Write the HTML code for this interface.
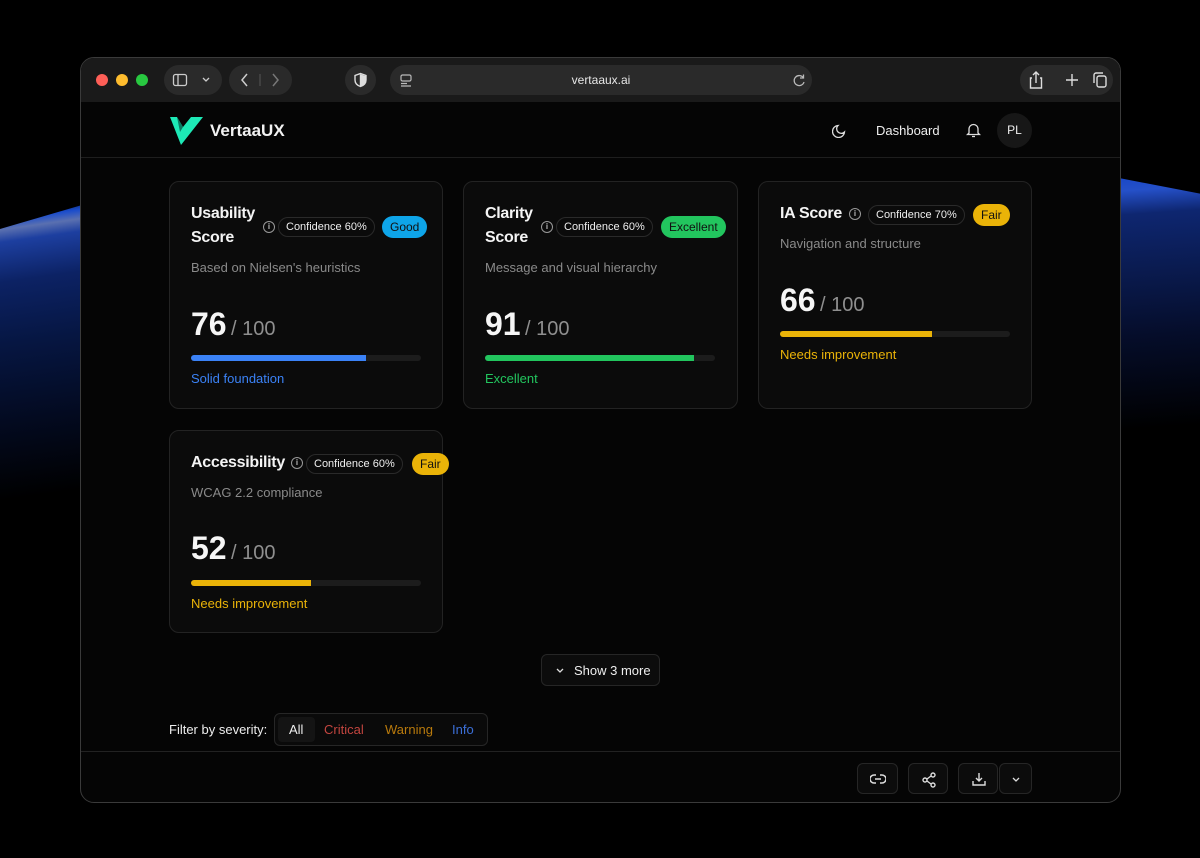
<!DOCTYPE html>
<html><head><meta charset="utf-8"><style>
*{margin:0;padding:0;box-sizing:border-box}
body{width:1200px;height:858px;background:#000;position:relative;overflow:hidden;font-family:"Liberation Sans",sans-serif;color:#fff}
.abs{position:absolute}
.glowL{left:0;top:205px;width:82px;height:300px;background:linear-gradient(172deg,rgba(0,0,0,0) 0%,#1a4ccc 5%,#5a70b0 8%,#1d3fa0 12%,#0c2264 25%,#061642 45%,#030a20 70%,#000 95%);clip-path:polygon(0 8%,100% 0,100% 100%,0 100%)}
.glowR{left:1119px;top:178px;width:81px;height:260px;background:linear-gradient(176deg,#1a48c8 0%,#2550c8 5%,#0e2670 14%,#0a1b50 35%,#050d2a 60%,#000 95%);clip-path:polygon(0 0,100% 6%,100% 100%,0 100%)}
.win{left:80px;top:57px;width:1041px;height:746px;border:1px solid #3a3a3a;border-radius:14px;background:#050505;overflow:hidden}
.tb{left:0;top:0;width:100%;height:44px;background:#1a1a1a}
.pill{background:#2a2a2a;border-radius:16px;height:30px;top:7px}
.dot{width:12px;height:12px;border-radius:50%;top:16px}
.hdr{left:0;top:44px;width:100%;height:56px;border-bottom:1px solid #1e1e1e;background:#050505}
.card{background:#0b0b0b;border:1px solid #232323;border-radius:10px}
.t{font-size:16px;font-weight:bold;color:#f4f4f4;line-height:24px;letter-spacing:-0.3px}
.conf{border:1px solid #2a2a2a;border-radius:10px;font-size:11px;height:20px;line-height:18px;padding:0 7px;color:#eee}
.badge{border-radius:11px;font-size:12px;height:22px;line-height:22px;padding:0 8px;color:#111}
.sub{font-size:13px;color:#8a8a8a}
.big{font-size:32px;font-weight:bold;color:#f6f6f6}
.den{font-size:20px;color:#8f8f8f}
.bar{height:6px;border-radius:3px;background:#1c1c1c;overflow:hidden}
.lbl{font-size:13px}
.info{width:12px;height:12px;border:1.3px solid #999;border-radius:50%;font-size:8px;color:#bbb;text-align:center;line-height:10px;font-weight:bold}
.btn{background:#0c0c0c;border:1px solid #262626;border-radius:6px}
</style></head><body>
<div class="abs glowL"></div>
<div class="abs glowR"></div>
<div class="abs win">
 <div class="abs tb">
  <div class="abs dot" style="left:15px;background:#fe5f57"></div>
  <div class="abs dot" style="left:35px;background:#febc2e"></div>
  <div class="abs dot" style="left:55px;background:#28c840"></div>
  <div class="abs pill" style="left:83px;width:58px"><svg class="abs" style="left:8px;top:7px" width="16" height="16" viewBox="0 0 16 16" fill="none" stroke="#ccc" stroke-width="1.3"><rect x="1.5" y="2.5" width="13" height="11" rx="2"/><path d="M6 2.5v11"/></svg><svg class="abs" style="left:38px;top:12px" width="8" height="6" viewBox="0 0 8 6" fill="none" stroke="#ccc" stroke-width="1.3"><path d="M1 1l3 3 3-3"/></svg></div>
  <div class="abs pill" style="left:148px;width:63px"><svg class="abs" style="left:8px;top:6px" width="48" height="18" viewBox="0 0 48 18" fill="none" stroke="#ccc" stroke-width="1.5"><path d="M10 3l-5 6 5 6"/><path d="M23 3v12" stroke="#555" stroke-width="1"/><path d="M36 3l5 6-5 6" stroke="#777"/></svg></div>
  <div class="abs pill" style="left:264px;width:31px"><svg class="abs" style="left:8px;top:7px" width="15" height="16" viewBox="0 0 15 16" fill="none" stroke="#ddd" stroke-width="1.4"><path d="M7.5 1.5l5.5 2v4.5c0 3.5-2.5 5.5-5.5 6.5-3-1-5.5-3-5.5-6.5V3.5z"/><path d="M7.5 3l4.5 1.6v3.4c0 3-2 4.5-4.5 5.4z" fill="#ddd"/></svg></div>
  <div class="abs pill" style="left:309px;width:422px;background:#2a2a2a"><span class="abs" style="left:0;width:100%;text-align:center;top:8px;font-size:12px;color:#e6e6e6">vertaaux.ai</span><svg class="abs" style="left:10px;top:9px" width="12" height="13" viewBox="0 0 12 13" fill="none" stroke="#bbb" stroke-width="1.2"><rect x="1" y="1" width="10" height="6" rx="1.5"/><path d="M1 9.5h6M1 12h10"/></svg><svg class="abs" style="left:403px;top:8px" width="13" height="14" viewBox="0 0 13 14" fill="none" stroke="#bbb" stroke-width="1.3"><path d="M10.5 5A5 5 0 1 0 11 9"/><path d="M10.5 1.5V5H7"/></svg></div>
  <div class="abs pill" style="left:939px;width:93px"><svg class="abs" style="left:7px;top:5px" width="80" height="20" viewBox="0 0 80 20" fill="none" stroke="#ddd" stroke-width="1.4"><path d="M5 8H3.5v10h11V8H13M9 13V2M6 5l3-3 3 3"/><path d="M45 4v12M39 10h12"/><rect x="70" y="6" width="9" height="11" rx="2"/><path d="M67 13V5a2 2 0 0 1 2-2h7"/></svg></div>
 </div>
 <div class="abs hdr">
  <svg class="abs" style="left:89px;top:15px" width="34" height="28" viewBox="0 0 34 28"><path d="M0 0h7l6 10L21 0h12L11 28z" fill="#1de9b6"/><path d="M7 0l6 10-3 5z" fill="#0a7a60"/></svg>
  <span class="abs" style="left:129px;top:19px;font-size:17px;font-weight:bold;color:#f2f2f2">VertaaUX</span>
  <svg class="abs" style="left:751px;top:21px" width="15" height="15" viewBox="0 0 15 15" fill="none" stroke="#ddd" stroke-width="1.3"><path d="M12.5 9A6 6 0 1 1 6 2.5 4.5 4.5 0 0 0 12.5 9z"/></svg>
  <span class="abs" style="left:795px;top:21px;font-size:13px;color:#eee">Dashboard</span>
  <svg class="abs" style="left:885px;top:20px" width="15" height="16" viewBox="0 0 15 16" fill="none" stroke="#ddd" stroke-width="1.3"><path d="M3 11V7a4.5 4.5 0 0 1 9 0v4l1.5 1.5h-12z"/><path d="M6 14.5h3"/></svg>
  <div class="abs" style="left:916px;top:11px;width:35px;height:35px;border-radius:50%;background:#171717;font-size:12px;line-height:35px;text-align:center;color:#eee">PL</div>
 </div>
</div>

<!-- card 1 -->
<div class="abs card" style="left:169px;top:181px;width:274px;height:228px"></div>
<div class="abs t" style="left:191px;top:202px">Usability<br>Score</div>
<div class="abs info" style="left:263px;top:221px">i</div>
<div class="abs conf" style="left:278px;top:217px">Confidence 60%</div>
<div class="abs badge" style="left:382px;top:216px;background:#0ea5e9">Good</div>
<div class="abs sub" style="left:191px;top:260px">Based on Nielsen's heuristics</div>
<div class="abs" style="left:191px;top:306px"><span class="big">76</span> <span class="den">/ 100</span></div>
<div class="abs bar" style="left:191px;top:355px;width:230px"><div style="width:76%;height:100%;background:#3b82f6"></div></div>
<div class="abs lbl" style="left:191px;top:371px;color:#3b82f6">Solid foundation</div>

<!-- card 2 -->
<div class="abs card" style="left:463px;top:181px;width:275px;height:228px"></div>
<div class="abs t" style="left:485px;top:202px">Clarity<br>Score</div>
<div class="abs info" style="left:541px;top:221px">i</div>
<div class="abs conf" style="left:556px;top:217px">Confidence 60%</div>
<div class="abs badge" style="left:661px;top:216px;background:#22c55e">Excellent</div>
<div class="abs sub" style="left:485px;top:260px">Message and visual hierarchy</div>
<div class="abs" style="left:485px;top:306px"><span class="big">91</span> <span class="den">/ 100</span></div>
<div class="abs bar" style="left:485px;top:355px;width:230px"><div style="width:91%;height:100%;background:#22c55e"></div></div>
<div class="abs lbl" style="left:485px;top:371px;color:#22c55e">Excellent</div>

<!-- card 3 -->
<div class="abs card" style="left:758px;top:181px;width:274px;height:228px"></div>
<div class="abs t" style="left:780px;top:202px">IA Score</div>
<div class="abs info" style="left:849px;top:208px">i</div>
<div class="abs conf" style="left:868px;top:205px">Confidence 70%</div>
<div class="abs badge" style="left:973px;top:204px;background:#eab308">Fair</div>
<div class="abs sub" style="left:780px;top:236px">Navigation and structure</div>
<div class="abs" style="left:780px;top:282px"><span class="big">66</span> <span class="den">/ 100</span></div>
<div class="abs bar" style="left:780px;top:331px;width:230px"><div style="width:66%;height:100%;background:#eab308"></div></div>
<div class="abs lbl" style="left:780px;top:347px;color:#eab308">Needs improvement</div>

<!-- card 4 -->
<div class="abs card" style="left:169px;top:430px;width:274px;height:203px"></div>
<div class="abs t" style="left:191px;top:451px">Accessibility</div>
<div class="abs info" style="left:291px;top:457px">i</div>
<div class="abs conf" style="left:306px;top:454px">Confidence 60%</div>
<div class="abs badge" style="left:412px;top:453px;background:#eab308">Fair</div>
<div class="abs sub" style="left:191px;top:485px">WCAG 2.2 compliance</div>
<div class="abs" style="left:191px;top:530px"><span class="big">52</span> <span class="den">/ 100</span></div>
<div class="abs bar" style="left:191px;top:580px;width:230px"><div style="width:52%;height:100%;background:#eab308"></div></div>
<div class="abs lbl" style="left:191px;top:596px;color:#eab308">Needs improvement</div>

<div class="abs btn" style="left:541px;top:654px;width:119px;height:32px"><svg class="abs" style="left:14px;top:13px" width="8" height="6" viewBox="0 0 8 6" fill="none" stroke="#ddd" stroke-width="1.3"><path d="M1 1l3 3 3-3"/></svg><span class="abs" style="left:32px;top:8px;font-size:13px;color:#eee">Show 3 more</span></div>

<div class="abs" style="left:169px;top:722px;font-size:13px;color:#eee">Filter by severity:</div>
<div class="abs btn" style="left:274px;top:713px;width:214px;height:33px;background:#0a0a0a"></div>
<div class="abs" style="left:278px;top:717px;width:37px;height:25px;background:#141414;border-radius:4px"></div>
<div class="abs" style="left:289px;top:722px;font-size:13px;color:#eee">All</div>
<div class="abs" style="left:324px;top:722px;font-size:13px;color:#c2453f">Critical</div>
<div class="abs" style="left:385px;top:722px;font-size:13px;color:#b97a0c">Warning</div>
<div class="abs" style="left:452px;top:722px;font-size:13px;color:#3b6fd8">Info</div>

<div class="abs" style="left:81px;top:751px;width:1039px;height:1px;background:#222"></div>
<div class="abs btn" style="left:857px;top:763px;width:41px;height:31px"><svg class="abs" style="left:12px;top:8px" width="16" height="14" viewBox="0 0 16 14" fill="none" stroke="#ddd" stroke-width="1.5"><path d="M6 3H4a4 4 0 0 0 0 8h2M10 3h2a4 4 0 0 1 0 8h-2M5 7h6"/></svg></div>
<div class="abs btn" style="left:908px;top:763px;width:40px;height:31px"><svg class="abs" style="left:12px;top:8px" width="16" height="16" viewBox="0 0 16 16" fill="none" stroke="#ddd" stroke-width="1.4"><circle cx="12" cy="3" r="2"/><circle cx="4" cy="8" r="2"/><circle cx="12" cy="13" r="2"/><path d="M6 7l4-3M6 9l4 3"/></svg></div>
<div class="abs btn" style="left:958px;top:763px;width:40px;height:31px"><svg class="abs" style="left:12px;top:7px" width="16" height="16" viewBox="0 0 16 16" fill="none" stroke="#ddd" stroke-width="1.4"><path d="M8 2v8M5 7l3 3 3-3M2 10v4h12v-4"/></svg></div>
<div class="abs btn" style="left:999px;top:763px;width:33px;height:31px"><svg class="abs" style="left:12px;top:13px" width="8" height="6" viewBox="0 0 8 6" fill="none" stroke="#ddd" stroke-width="1.3"><path d="M1 1l3 3 3-3"/></svg></div>
</body></html>
